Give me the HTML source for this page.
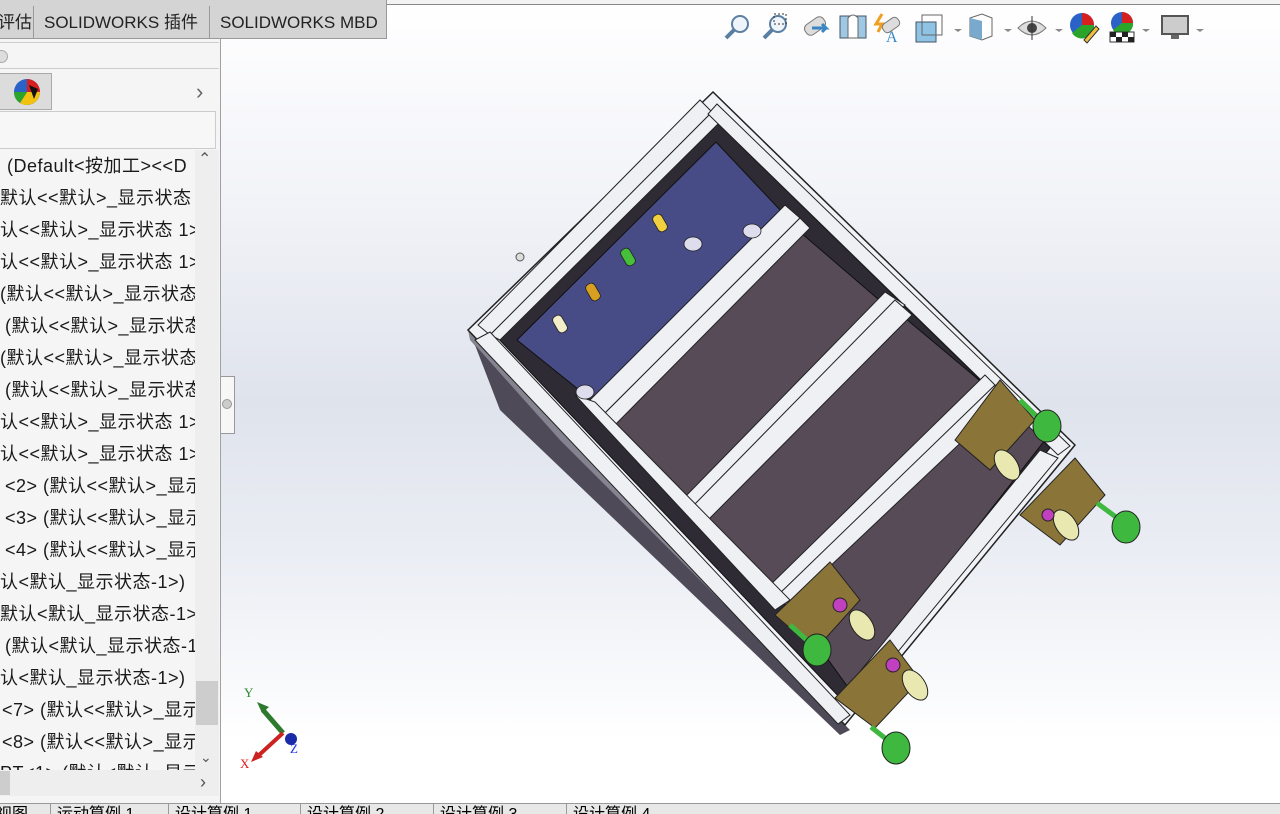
<!DOCTYPE html>
<html><head><meta charset="utf-8">
<style>
*{margin:0;padding:0;box-sizing:border-box}
body{width:1280px;height:814px;overflow:hidden;position:relative;font-family:"Liberation Sans","Noto Sans CJK SC",sans-serif;background:#fff}
#vp{position:absolute;left:221px;top:0;width:1059px;height:803px;background:linear-gradient(180deg,#ffffff 0%,#f2f3f8 25%,#dfe3ec 50%,#ebeef4 70%,#ffffff 92%)}
#tabs{position:absolute;left:0;top:0;height:39px;width:387px;background:#d4d4d4;border-bottom:1px solid #999;border-right:1px solid #999}
.tab{position:absolute;top:6px;height:33px;font-size:17px;color:#222;line-height:33px;border-left:1px solid #999;padding-left:10px}
#topline{position:absolute;left:387px;top:0;width:893px;height:5px;background:#f3f3f3;border-bottom:1px solid #888}
#side{position:absolute;left:0;top:39px;width:221px;height:764px;background:#f5f5f5;border-right:1px solid #a0a0a0}
.row{position:absolute;left:0;font-size:18px;letter-spacing:0.5px;color:#1a1a1a;white-space:nowrap;line-height:20px}
#btm{position:absolute;left:0;top:803px;width:1280px;height:11px;background:#e8e8e8;border-top:1px solid #999;font-size:16px;overflow:hidden}
#btm span{position:absolute;top:0;line-height:22px;border-left:1px solid #999;padding-left:6px}
</style></head><body>
<div id="vp"></div>
<div id="topline"></div>
<div id="tabs">
<div class="tab" style="left:-12px;border-left:none">评估</div>
<div class="tab" style="left:33px;width:176px">SOLIDWORKS 插件</div>
<div class="tab" style="left:209px;width:178px">SOLIDWORKS MBD</div>
</div>
<div id="side">
<div style="position:absolute;left:0;top:3px;width:219px;height:1px;background:#ccc"></div>
<div style="position:absolute;left:-5px;top:11px;width:13px;height:13px;border-radius:50%;background:#ddd;border:1px solid #aaa"></div>
<div style="position:absolute;left:0;top:29px;width:219px;height:1px;background:#ccc"></div>
<div style="position:absolute;left:0;top:34px;width:52px;height:37px;background:#dcdcdc;border:1px solid #aaa;border-left:none"></div>
<svg style="position:absolute;left:12px;top:38px" width="30" height="30" viewBox="0 0 30 30"><circle cx="15" cy="15" r="13" fill="#2a62c8"/><path d="M15 15 L28 15 A13 13 0 0 1 8 26 Z" fill="#f2c20e"/><path d="M15 15 L8 26 A13 13 0 0 1 2 15 Z" fill="#2aa52a"/><path d="M15 15 L15 2 A13 13 0 0 1 28 15 Z" fill="#d62020"/><path d="M17 8 L26 12 L22 22 Z" fill="#111"/></svg>
<div style="position:absolute;left:196px;top:40px;font-size:22px;color:#666">›</div>
<div style="position:absolute;left:0;top:72px;width:216px;height:38px;background:#f7f7f7;border:1px solid #ccc;border-left:none"></div>
<div style="position:absolute;left:195px;top:111px;width:24px;height:620px;background:#eeeeee"></div>
<div style="position:absolute;left:196px;top:642px;width:22px;height:44px;background:#cdcdcd"></div>
<div style="position:absolute;left:198px;top:110px;font-size:16px;color:#555">⌃</div>
<div style="position:absolute;left:200px;top:710px;font-size:14px;color:#555">⌄</div>
<div style="position:absolute;left:0;top:731px;width:219px;height:26px;background:#eeeeee"></div>
<div style="position:absolute;left:0;top:732px;width:10px;height:24px;background:#cdcdcd"></div>
<div style="position:absolute;left:200px;top:733px;font-size:18px;color:#555">›</div>
</div>
<div style="position:absolute;left:0;top:150px;width:195px;height:620px;overflow:hidden">
<div class="row" style="top:6px;left:7px">(Default&lt;按加工&gt;&lt;&lt;D</div>
<div class="row" style="top:38px">默认&lt;&lt;默认&gt;_显示状态</div>
<div class="row" style="top:70px">认&lt;&lt;默认&gt;_显示状态 1&gt;)</div>
<div class="row" style="top:102px">认&lt;&lt;默认&gt;_显示状态 1&gt;)</div>
<div class="row" style="top:134px">(默认&lt;&lt;默认&gt;_显示状态</div>
<div class="row" style="top:166px;left:5px">(默认&lt;&lt;默认&gt;_显示状态</div>
<div class="row" style="top:198px">(默认&lt;&lt;默认&gt;_显示状态</div>
<div class="row" style="top:230px;left:5px">(默认&lt;&lt;默认&gt;_显示状态</div>
<div class="row" style="top:262px">认&lt;&lt;默认&gt;_显示状态 1&gt;</div>
<div class="row" style="top:294px">认&lt;&lt;默认&gt;_显示状态 1&gt;</div>
<div class="row" style="top:326px;left:5px">&lt;2&gt; (默认&lt;&lt;默认&gt;_显示</div>
<div class="row" style="top:358px;left:5px">&lt;3&gt; (默认&lt;&lt;默认&gt;_显示</div>
<div class="row" style="top:390px;left:5px">&lt;4&gt; (默认&lt;&lt;默认&gt;_显示</div>
<div class="row" style="top:422px">认&lt;默认_显示状态-1&gt;)</div>
<div class="row" style="top:454px">默认&lt;默认_显示状态-1&gt;</div>
<div class="row" style="top:486px;left:5px">(默认&lt;默认_显示状态-1</div>
<div class="row" style="top:518px">认&lt;默认_显示状态-1&gt;)</div>
<div class="row" style="top:550px;left:2px">&lt;7&gt; (默认&lt;&lt;默认&gt;_显示</div>
<div class="row" style="top:582px;left:2px">&lt;8&gt; (默认&lt;&lt;默认&gt;_显示</div>
<div class="row" style="top:613px">PT&lt;1&gt; (默认&lt;默认_显示</div>
</div>
<div style="position:absolute;left:221px;top:376px;width:14px;height:58px;background:#f7f7f7;border:1px solid #999;border-left:none"><div style="position:absolute;left:1px;top:22px;width:10px;height:10px;border-radius:50%;background:#ccc;border:1px solid #999"></div></div>

<!-- toolbar -->
<svg style="position:absolute;left:722px;top:10px" width="490" height="34" viewBox="0 0 490 34">
<g stroke="#5b7fa3" stroke-width="2" fill="#eef4fa"><circle cx="18" cy="14" r="8"/><line x1="12" y1="20" x2="4" y2="28" stroke-width="4"/>
<circle cx="56" cy="14" r="8"/><line x1="50" y1="20" x2="42" y2="28" stroke-width="4"/></g>
<rect x="52" y="4" width="12" height="10" fill="none" stroke="#333" stroke-dasharray="2 2"/>
<rect x="82" y="10" width="22" height="12" rx="5" fill="#ddd" stroke="#777" transform="rotate(-35 93 16)"/><path d="M90 18 h14 l-4 -4 M104 18 l-4 4" stroke="#3a86c4" stroke-width="3" fill="none"/>
<path d="M118 6 h26 v22 h-26z" fill="#9ec8e3" stroke="#456"/><path d="M126 8 q5 -6 10 0 v20 h-10z" fill="#fff" stroke="#666"/>
<path d="M160 4 l-6 10 h6 l-4 8" stroke="#f0a020" stroke-width="3" fill="none"/><rect x="160" y="10" width="18" height="10" rx="4" fill="#ddd" stroke="#777" transform="rotate(-35 169 15)"/><text x="164" y="32" font-size="16" fill="#3a86c4" font-family="Liberation Serif">A</text>
<rect x="194" y="12" width="20" height="20" fill="#8fc3e4" stroke="#456"/><rect x="200" y="5" width="20" height="20" fill="none" stroke="#666"/>
<path d="M232 19 l4 3 l4 -3z" fill="#888"/>
<path d="M248 8 l12 -4 l10 4 v18 l-10 4 l-12 -4z" fill="#fff" stroke="#666"/><path d="M248 8 l12 3 v19 l-12 -4z" fill="#79a9cc"/>
<path d="M282 19 l4 3 l4 -3z" fill="#888"/>
<path d="M296 18 q14 -14 28 0 q-14 14 -28 0z" fill="#ddd" stroke="#777"/><circle cx="310" cy="18" r="5" fill="#444"/><line x1="310" y1="6" x2="310" y2="30" stroke="#333"/>
<path d="M333 19 l4 3 l4 -3z" fill="#888"/>
<circle cx="360" cy="15" r="12" fill="#2a62c8"/><path d="M360 15 L372 15 A12 12 0 0 1 350 23Z" fill="#2aa52a"/><path d="M360 15 L360 3 A12 12 0 0 1 372 15Z" fill="#d62020"/><path d="M362 30 l12 -14 l3 3 l-12 14z" fill="#f0c040" stroke="#333"/>
<circle cx="400" cy="13" r="11" fill="#2a62c8"/><path d="M400 13 L411 13 A11 11 0 0 1 391 20Z" fill="#2aa52a"/><path d="M400 13 L400 2 A11 11 0 0 1 411 13Z" fill="#d62020"/>
<rect x="388" y="22" width="24" height="10" fill="#fff" stroke="#333"/><path d="M388 22h6v5h-6zM400 22h6v5h-6zM394 27h6v5h-6zM406 27h6v5h-6z" fill="#222"/>
<path d="M420 19 l4 3 l4 -3z" fill="#888"/>
<rect x="440" y="6" width="26" height="18" fill="#ccc" stroke="#555" stroke-width="2"/><rect x="449" y="25" width="8" height="4" fill="#666"/>
<path d="M474 19 l4 3 l4 -3z" fill="#888"/>
</svg>

<!-- model -->
<svg style="position:absolute;left:0;top:0" width="1280" height="814" viewBox="0 0 1280 814">
<polygon points="468,330 845,725 830,723 540,420 470,340" fill="#6e6a78" opacity="0.8"/>
<polygon points="475,345 560,440 850,730 840,735 500,410" fill="#4f4a58"/>
<polygon points="713,92 1075,445 845,725 468,330" fill="#f0f2f6" stroke="#222" stroke-width="1.5"/>
<polygon points="712,118 1050,448 842,700 494,334" fill="#2e2b34" stroke="#111"/>
<polygon points="716,142 782,212 594,402 517,340" fill="#474b86" stroke="#111"/>
<polygon points="800,232 885,305 690,500 610,420" fill="#564b57" stroke="#111"/>
<polygon points="905,318 985,385 775,590 700,510" fill="#564b57" stroke="#111"/>
<polygon points="1000,395 1045,440 850,690 785,600" fill="#564b57" stroke="#111"/>
<g stroke="#222" stroke-width="1" fill="#eef0f4">
<polygon points="700,100 712,112 490,335 478,325"/>
<polygon points="712,112 722,120 500,340 490,335"/>
<polygon points="717,104 1070,446 1058,455 708,114"/>
<polygon points="475,340 490,332 850,715 838,724"/>
<polygon points="785,205 800,218 600,418 585,405"/>
<polygon points="800,218 810,228 612,428 600,418"/>
<polygon points="885,292 905,305 700,512 682,500"/>
<polygon points="895,300 912,315 708,520 692,507"/>
<polygon points="985,375 1000,390 780,600 765,590"/>
<polygon points="995,385 1008,398 788,606 776,597"/>
<polygon points="1040,450 1058,458 858,700 845,690"/>
<polygon points="575,395 595,402 790,600 775,610"/>
</g>
<g stroke="#222" stroke-width="0.8">
<rect x="655" y="214" width="10" height="18" rx="4" fill="#f1d040" transform="rotate(-30 660 223)"/>
<rect x="623" y="248" width="10" height="18" rx="4" fill="#46c03a" transform="rotate(-30 628 257)"/>
<rect x="588" y="283" width="10" height="18" rx="4" fill="#d8a020" transform="rotate(-30 593 292)"/>
<rect x="555" y="315" width="10" height="18" rx="4" fill="#f4eec8" transform="rotate(-30 560 324)"/>
<ellipse cx="693" cy="244" rx="9" ry="7" fill="#dde"/><ellipse cx="752" cy="231" rx="9" ry="7" fill="#dde"/><ellipse cx="585" cy="392" rx="9" ry="7" fill="#dde"/>
</g>
<circle cx="520" cy="257" r="4" fill="#ddd" stroke="#555"/>
<g stroke="#222" stroke-width="1">
<polygon points="1000,380 1035,420 990,470 955,440" fill="#8a7438"/>
<polygon points="1075,458 1105,495 1060,545 1020,515" fill="#8a7438"/>
<polygon points="830,562 860,600 815,650 775,615" fill="#8a7438"/>
<polygon points="890,640 920,680 875,728 835,698" fill="#8a7438"/>
<g fill="#e8e8b0"><ellipse cx="1007" cy="465" rx="10" ry="17" transform="rotate(-35 1007 465)"/><ellipse cx="1066" cy="525" rx="10" ry="17" transform="rotate(-35 1066 525)"/><ellipse cx="862" cy="625" rx="10" ry="17" transform="rotate(-35 862 625)"/><ellipse cx="915" cy="685" rx="10" ry="17" transform="rotate(-35 915 685)"/></g>
<g fill="#c040c0"><circle cx="840" cy="605" r="7"/><circle cx="893" cy="665" r="7"/><circle cx="1048" cy="515" r="6"/></g>
<g fill="#3fb83f"><line x1="1020" y1="400" x2="1040" y2="420" stroke="#3fb83f" stroke-width="5"/><ellipse cx="1047" cy="426" rx="14" ry="16"/>
<line x1="1097" y1="503" x2="1120" y2="520" stroke="#3fb83f" stroke-width="5"/><ellipse cx="1126" cy="527" rx="14" ry="16"/>
<line x1="790" y1="625" x2="810" y2="643" stroke="#3fb83f" stroke-width="5"/><ellipse cx="817" cy="650" rx="14" ry="16"/>
<line x1="871" y1="727" x2="890" y2="742" stroke="#3fb83f" stroke-width="5"/><ellipse cx="896" cy="748" rx="14" ry="16"/></g>
</g>
<g>
<line x1="283" y1="733" x2="263" y2="710" stroke="#2d7a2d" stroke-width="5"/><path d="M257 702 l12 5 l-7 6z" fill="#2d7a2d"/>
<line x1="283" y1="733" x2="258" y2="756" stroke="#cc2222" stroke-width="4"/><path d="M251 762 l5 -11 l7 6z" fill="#cc2222"/>
<circle cx="291" cy="739" r="6" fill="#1a2aa8"/>
<text x="244" y="697" font-size="13" fill="#2a8a2a" font-family="Liberation Serif">Y</text>
<text x="240" y="768" font-size="13" fill="#e02020" font-family="Liberation Serif">X</text>
<text x="290" y="753" font-size="13" fill="#2030e0" font-family="Liberation Serif">Z</text>
</g>
</svg>

<div id="btm">
<span style="left:-10px;border-left:none">视图</span>
<span style="left:50px">运动算例 1</span>
<span style="left:168px">设计算例 1</span>
<span style="left:300px">设计算例 2</span>
<span style="left:433px">设计算例 3</span>
<span style="left:566px">设计算例 4</span>
<span style="left:708px"></span>
</div>
</body></html>
